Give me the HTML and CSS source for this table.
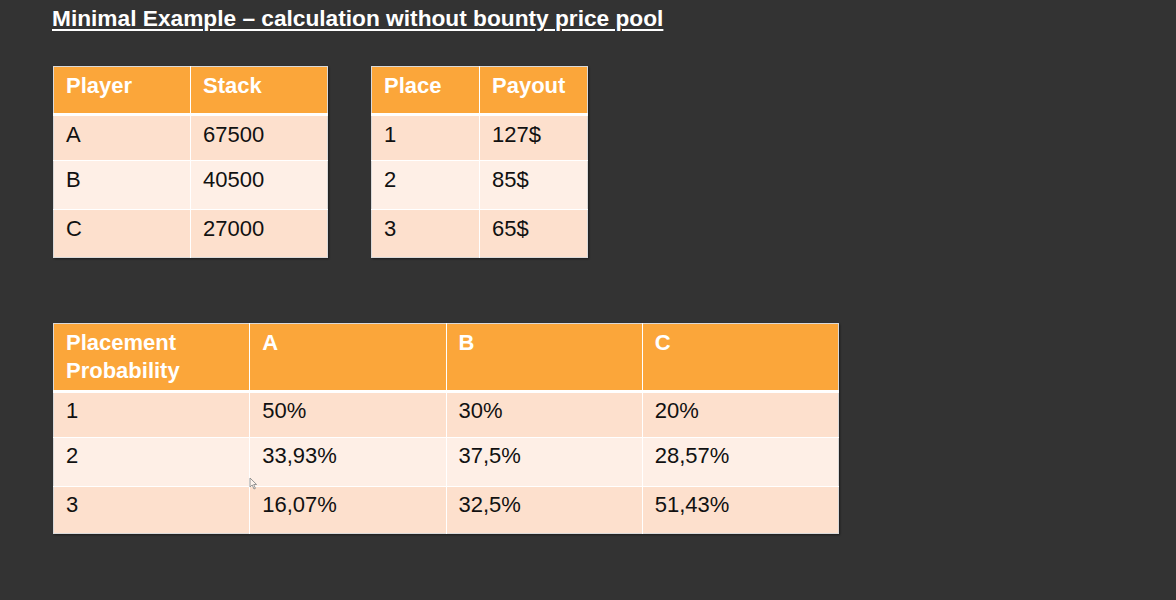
FILE: index.html
```html
<!DOCTYPE html>
<html lang="en">
<head>
<meta charset="utf-8">
<title>Minimal Example</title>
<link rel="stylesheet" href="styles.css">
</head>
<body>
<main class="slide">
  <h1 class="title">Minimal Example – calculation without bounty price pool</h1>
  <div class="top-row">
    <table class="grid t-stack">
      <thead><tr><th>Player</th><th>Stack</th></tr></thead>
      <tbody>
        <tr class="r1"><td>A</td><td>67500</td></tr>
        <tr class="r2"><td>B</td><td>40500</td></tr>
        <tr class="r3"><td>C</td><td>27000</td></tr>
      </tbody>
    </table>
    <table class="grid t-payout">
      <thead><tr><th>Place</th><th>Payout</th></tr></thead>
      <tbody>
        <tr class="r1"><td>1</td><td>127$</td></tr>
        <tr class="r2"><td>2</td><td>85$</td></tr>
        <tr class="r3"><td>3</td><td>65$</td></tr>
      </tbody>
    </table>
  </div>
  <div class="prob-wrap">
    <table class="grid t-prob">
      <thead><tr><th>Placement<br>Probability</th><th>A</th><th>B</th><th>C</th></tr></thead>
      <tbody>
        <tr class="r1"><td>1</td><td>50%</td><td>30%</td><td>20%</td></tr>
        <tr class="r2"><td>2</td><td>33,93%</td><td>37,5%</td><td>28,57%</td></tr>
        <tr class="r3"><td>3</td><td>16,07%</td><td>32,5%</td><td>51,43%</td></tr>
      </tbody>
    </table>
    <svg class="cursor" width="9" height="13" viewBox="0 0 9 13" aria-hidden="true">
      <path d="M1 1 L1 10 L3.2 8 L5 12 L6.4 11.3 L4.7 7.5 L7.6 7.5 Z" fill="#fdf3ec" stroke="#8a8a8a" stroke-width="0.9" stroke-linejoin="round"/>
    </svg>
  </div>
</main>
</body>
</html>
```

FILE: styles.css
```css
html, body {
  margin: 0;
  padding: 0;
  background: #333333;
}

.slide {
  width: 1176px;
  height: 600px;
  box-sizing: border-box;
  padding: 6px 0 0 52px;
  font-family: "Liberation Sans", Arial, sans-serif;
  background: #333333;
  overflow: hidden;
}

.title {
  margin: 0;
  font-size: 22.7px;
  line-height: 24px;
  font-weight: 700;
  color: #ffffff;
  text-decoration: underline;
  text-decoration-thickness: 2px;
  text-underline-offset: 3px;
  white-space: nowrap;
}

.top-row {
  display: flex;
  align-items: flex-start;
  gap: 43px;
  margin-top: 36px;
  padding-left: 1px;
}

.prob-wrap {
  position: relative;
  margin-top: 65px;
  padding-left: 1px;
  width: 786px;
}

.grid {
  border-collapse: collapse;
  border: 1px solid #d9d9d9;
  box-shadow: 1px 1px 2px rgba(0, 0, 0, 0.45);
  font-size: 22px;
  line-height: 24px;
  color: #111111;
  table-layout: fixed;
}

.grid th,
.grid td {
  text-align: left;
  vertical-align: top;
  padding: 7px 0 0 12px;
  border-left: 1px solid #ffffff;
  box-sizing: border-box;
}

.grid th:first-child,
.grid td:first-child {
  border-left: none;
}

.grid th {
  background: #fba63a;
  color: #ffffff;
  font-weight: 700;
  border-bottom: 3px solid #ffffff;
}

.grid tbody tr + tr td {
  border-top: 1px solid #ffffff;
}

.grid .r1 td,
.grid .r3 td {
  background: #fde0cd;
}

.grid .r2 td {
  background: #feefe6;
}

/* Stack table */
.t-stack { width: 274px; }
.t-stack th:nth-child(1), .t-stack td:nth-child(1) { width: 137px; }
.t-stack th:nth-child(2), .t-stack td:nth-child(2) { width: 137px; }

/* Payout table */
.t-payout { width: 216px; }
.t-payout th:nth-child(1), .t-payout td:nth-child(1) { width: 108px; }
.t-payout th:nth-child(2), .t-payout td:nth-child(2) { width: 108px; }

.t-stack th, .t-payout th { height: 48px; }
.t-stack tr.r1 td, .t-payout tr.r1 td { height: 46px; }
.t-stack tr.r2 td, .t-payout tr.r2 td { height: 49px; }
.t-stack tr.r3 td, .t-payout tr.r3 td { height: 48px; }

/* Probability table */
.t-prob { width: 786px; }
.t-prob th, .t-prob td { width: 196px; }
.t-prob th {
  height: 68px;
  line-height: 28px;
  padding-top: 5px;
}
.t-prob tr.r1 td { height: 46px; padding-top: 6px; }
.t-prob tr.r2 td { height: 49px; padding-top: 6px; }
.t-prob tr.r3 td { height: 47px; padding-top: 6px; }

.cursor {
  position: absolute;
  left: 197px;
  top: 154px;
}
```
